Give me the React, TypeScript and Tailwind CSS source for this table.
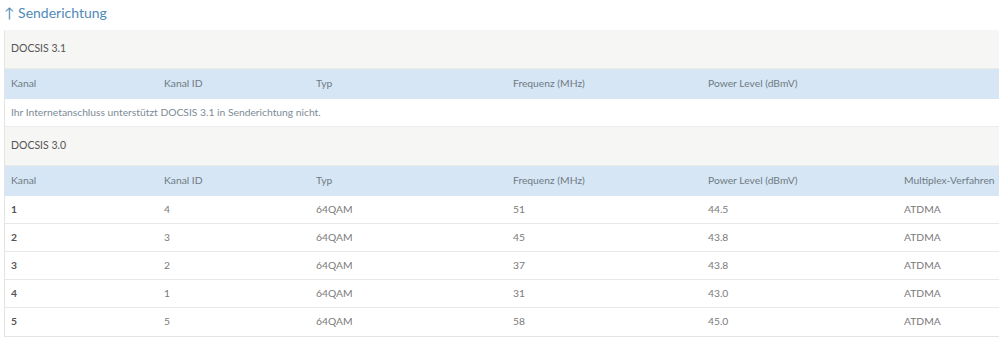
import React from 'react';

const cols = 'grid grid-cols-[153px_152px_197px_195px_196px_1fr]';

const headers = ['Kanal', 'Kanal ID', 'Typ', 'Frequenz (MHz)', 'Power Level (dBmV)'];

const rows = [
  { kanal: '1', id: '4', typ: '64QAM', freq: '51', power: '44.5', mux: 'ATDMA' },
  { kanal: '2', id: '3', typ: '64QAM', freq: '45', power: '43.8', mux: 'ATDMA' },
  { kanal: '3', id: '2', typ: '64QAM', freq: '37', power: '43.8', mux: 'ATDMA' },
  { kanal: '4', id: '1', typ: '64QAM', freq: '31', power: '43.0', mux: 'ATDMA' },
  { kanal: '5', id: '5', typ: '64QAM', freq: '58', power: '45.0', mux: 'ATDMA' },
];

function SectionTitle({ label }: { label: string }) {
  return (
    <div className="h-[39px] flex items-center px-[6px] bg-[#f6f6f4] border-b border-[#ebebe8] text-[10.5px] text-[#555]">
      {label}
    </div>
  );
}

function HeaderRow({ extra }: { extra?: string }) {
  return (
    <div className={`${cols} h-[30px] items-center bg-[#d6e6f5] text-[10.3px] text-[#6f7a84]`}>
      {headers.map((h) => (
        <div key={h} className="px-[6px]">{h}</div>
      ))}
      <div className="px-[6px] whitespace-nowrap">{extra}</div>
    </div>
  );
}

export default function App() {
  return (
    <div className="w-[999px] h-[338px] bg-white overflow-hidden" style={{ fontFamily: 'Lato, "Liberation Sans", sans-serif' }}>
      <div className="h-[30px] pl-[4px] pt-[2px] text-[14px] text-[#4f8ab8]">↑ Senderichtung</div>
      <div className="ml-[4px] w-[1010px] border-l border-b border-[#e4e4e4]">
        <SectionTitle label="DOCSIS 3.1" />
        <HeaderRow />
        <div className="h-[28px] flex items-center px-[6px] text-[10.3px] text-[#7d8b96] border-b border-[#ececec]">
          Ihr Internetanschluss unterstützt DOCSIS 3.1 in Senderichtung nicht.
        </div>
        <SectionTitle label="DOCSIS 3.0" />
        <HeaderRow extra="Multiplex-Verfahren" />
        {rows.map((r, i) => (
          <div
            key={r.kanal}
            className={`${cols} h-[28px] items-center text-[10.3px] text-[#7a7a7a] ${i < rows.length - 1 ? 'border-b border-[#e8e8e8]' : ''}`}
          >
            <div className="px-[6px] font-bold text-[#555]">{r.kanal}</div>
            <div className="px-[6px]">{r.id}</div>
            <div className="px-[6px]">{r.typ}</div>
            <div className="px-[6px]">{r.freq}</div>
            <div className="px-[6px]">{r.power}</div>
            <div className="px-[6px]">{r.mux}</div>
          </div>
        ))}
      </div>
    </div>
  );
}
